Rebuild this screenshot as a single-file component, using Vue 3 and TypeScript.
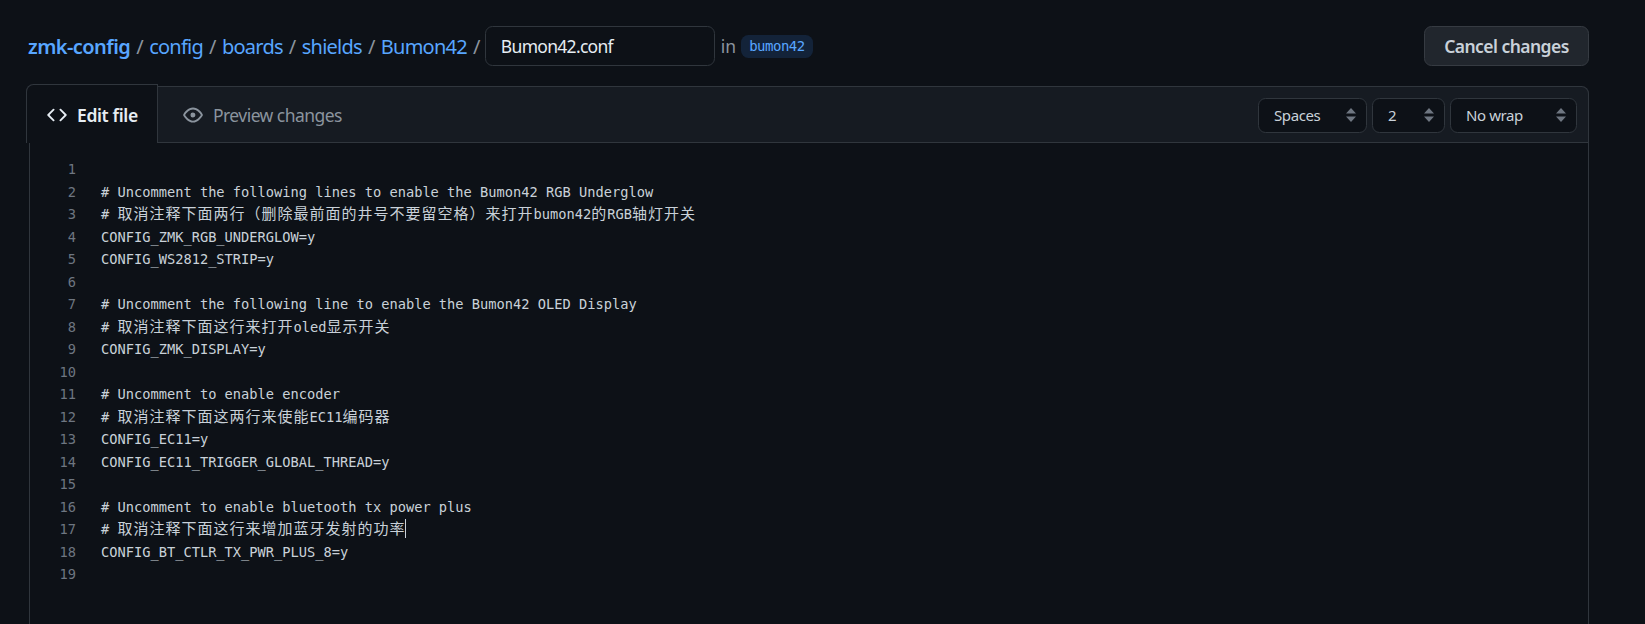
<script setup lang="ts">
const text: string[] = [
  '',
  '# Uncomment the following lines to enable the Bumon42 RGB Underglow',
  '# 取消注释下面两行（删除最前面的井号不要留空格）来打开bumon42的RGB轴灯开关',
  'CONFIG_ZMK_RGB_UNDERGLOW=y',
  'CONFIG_WS2812_STRIP=y',
  '',
  '# Uncomment the following line to enable the Bumon42 OLED Display',
  '# 取消注释下面这行来打开oled显示开关',
  'CONFIG_ZMK_DISPLAY=y',
  '',
  '# Uncomment to enable encoder',
  '# 取消注释下面这两行来使能EC11编码器',
  'CONFIG_EC11=y',
  'CONFIG_EC11_TRIGGER_GLOBAL_THREAD=y',
  '',
  '# Uncomment to enable bluetooth tx power plus',
  '# 取消注释下面这行来增加蓝牙发射的功率',
  'CONFIG_BT_CTLR_TX_PWR_PLUS_8=y',
  '',
]

interface Seg { t: string; cjk: boolean }

function segments(line: string): Seg[] {
  const parts = line.match(/[\u3000-\u9fff\uff00-\uffef]+|[^\u3000-\u9fff\uff00-\uffef]+/g) ?? []
  return parts.map((t) => ({ t, cjk: /[\u3000-\u9fff\uff00-\uffef]/.test(t) }))
}

const crumbs: string[] = ['config', 'boards', 'shields', 'Bumon42']
const caretLine = 17
</script>

<template>
  <div class="page">
    <header class="topbar">
      <nav class="crumbs">
        <a class="crumb root">zmk-config</a>
        <template v-for="c in crumbs" :key="c">
          <span class="sep">/</span>
          <a class="crumb">{{ c }}</a>
        </template>
        <span class="sep last">/</span>
        <div class="name-input">Bumon42.conf</div>
        <span class="in">in</span>
        <span class="branch">bumon42</span>
      </nav>
      <button class="cancel">Cancel changes</button>
    </header>

    <section class="box">
      <div class="box-head">
        <div class="tab active">
          <svg class="ico" viewBox="0 0 16 16" width="20" height="20" fill="currentColor"><path d="m11.28 3.22 4.25 4.25a.75.75 0 0 1 0 1.06l-4.25 4.25a.749.749 0 0 1-1.275-.326.749.749 0 0 1 .215-.734L13.94 8l-3.72-3.72a.749.749 0 0 1 .326-1.275.749.749 0 0 1 .734.215Zm-6.56 0a.751.751 0 0 1 1.042.018.751.751 0 0 1 .018 1.042L2.06 8l3.72 3.72a.749.749 0 0 1-.326 1.275.749.749 0 0 1-.734-.215L.47 8.53a.75.75 0 0 1 0-1.06Z"/></svg>
          <span>Edit file</span>
        </div>
        <div class="tab muted">
          <svg class="ico" viewBox="0 0 16 16" width="20" height="20" fill="currentColor"><path d="M8 2c1.981 0 3.671.992 4.933 2.078 1.27 1.091 2.187 2.345 2.637 3.023a1.62 1.62 0 0 1 0 1.798c-.45.678-1.367 1.932-2.637 3.023C11.67 13.008 9.981 14 8 14c-1.981 0-3.671-.992-4.933-2.078C1.797 10.83.88 9.576.43 8.898a1.62 1.62 0 0 1 0-1.798c.45-.677 1.367-1.931 2.637-3.022C4.33 2.992 6.019 2 8 2ZM1.679 7.932a.12.12 0 0 0 0 .136c.411.622 1.241 1.75 2.366 2.717C5.176 11.758 6.527 12.5 8 12.5c1.473 0 2.825-.742 3.955-1.715 1.124-.967 1.954-2.096 2.366-2.717a.12.12 0 0 0 0-.136c-.412-.621-1.242-1.75-2.366-2.717C10.824 4.242 9.473 3.5 8 3.5c-1.473 0-2.825.742-3.955 1.715-1.124.967-1.954 2.096-2.366 2.717ZM8 10a2 2 0 1 1-.001-3.999A2 2 0 0 1 8 10Z"/></svg>
          <span>Preview changes</span>
        </div>
        <div class="opts">
          <div class="sel w-spaces"><span>Spaces</span><svg viewBox="0 0 10 14" width="10" height="14"><path d="M5 0 10 5.5H0Z M5 14 0 8.5H10Z" fill="#6e7681"/></svg></div>
          <div class="sel w-size"><span>2</span><svg viewBox="0 0 10 14" width="10" height="14"><path d="M5 0 10 5.5H0Z M5 14 0 8.5H10Z" fill="#6e7681"/></svg></div>
          <div class="sel w-wrap"><span>No wrap</span><svg viewBox="0 0 10 14" width="10" height="14"><path d="M5 0 10 5.5H0Z M5 14 0 8.5H10Z" fill="#6e7681"/></svg></div>
        </div>
      </div>
      <div class="editor">
        <div v-for="(line, i) in text" :key="i" class="row">
          <span class="num">{{ i + 1 }}</span>
          <span class="code"><span v-for="(s, j) in segments(line)" :key="j" :class="s.cjk ? 'cjk' : 'lat'">{{ s.t }}</span><i v-if="i + 1 === caretLine" class="caret"></i></span>
        </div>
      </div>
    </section>
  </div>
</template>

<style>
html, body { background: #0d1117; }
</style>

<style scoped>
.page {
  height: 624px;
  overflow: hidden;
  background: #0d1117;
  color: #c9d1d9;
  font-family: "Noto Sans", sans-serif;
  box-sizing: border-box;
  padding-top: 26px;
}
.topbar {
  display: flex;
  justify-content: space-between;
  align-items: center;
  height: 40px;
  padding: 0 56px 0 28px;
}
.crumbs {
  display: flex;
  align-items: center;
  font-size: 20px;
  letter-spacing: -0.75px;
}
.crumb { color: #58a6ff; }
.root { font-weight: 600; letter-spacing: -0.55px; }
.sep { color: #8b949e; margin: 0 6px; letter-spacing: -0.55px; }
.sep.last { margin-right: 5px; }
.name-input {
  box-sizing: border-box;
  width: 230px;
  height: 40px;
  padding: 0 15px;
  display: flex;
  align-items: center;
  border: 1px solid #30363d;
  border-radius: 7.5px;
  background: #0d1117;
  color: #e6edf3;
  font-size: 17.5px;
  letter-spacing: -0.7px;
}
.in { color: #8b949e; margin: 0 5px 0 6px; font-size: 17.5px; letter-spacing: 0; }
.branch {
  height: 23px;
  display: flex;
  align-items: center;
  padding: 0 8px;
  border-radius: 7.5px;
  background: rgba(56, 139, 253, 0.15);
  color: #58a6ff;
  font: 14px "DejaVu Sans Mono", monospace;
  letter-spacing: -0.5px;
}
.cancel {
  box-sizing: border-box;
  width: 165px;
  height: 40px;
  border: 1px solid #363b42;
  border-radius: 7.5px;
  background: #21262d;
  color: #c9d1d9;
  font: 600 17.5px "Noto Sans", sans-serif;
  letter-spacing: -0.55px;
  padding: 0;
}
.box {
  margin: 20px 56px 0 26px;
}
.box-head {
  box-sizing: border-box;
  height: 57px;
  display: flex;
  align-items: stretch;
  background: #161b22;
  border: 1px solid #30363d;
  border-radius: 7.5px 7.5px 0 0;
  border-left: none;
  font-size: 17.5px;
  letter-spacing: -0.55px;
}
.tab {
  display: flex;
  align-items: center;
  box-sizing: border-box;
}
.tab.active {
  width: 132px;
  height: 59px;
  margin-top: -3px;
  margin-bottom: -1px;
  padding-left: 20px;
  padding-top: 2px;
  gap: 10px;
  background: #0d1117;
  border: 1px solid #30363d;
  border-bottom: none;
  border-radius: 7.5px 0 0 0;
  color: #e6edf3;
  font-weight: 600;
  letter-spacing: -0.35px;
}
.tab.muted { color: #8b949e; padding-left: 25px; gap: 10px; }
.ico { flex: none; }
.opts {
  margin-left: auto;
  display: flex;
  align-items: center;
  gap: 5px;
  padding-right: 11px;
  padding-top: 1px;
  font-size: 15px;
  letter-spacing: -0.4px;
}
.sel {
  box-sizing: border-box;
  height: 35px;
  display: flex;
  align-items: center;
  justify-content: space-between;
  padding: 0 10px 0 15px;
  border: 1px solid #30363d;
  border-radius: 7.5px;
  background: #0d1117;
}
.w-spaces { width: 109px; }
.w-size { width: 73px; }
.w-wrap { width: 127px; }
.editor {
  margin-left: 3px;
  padding-top: 15px;
  border-left: 1px solid #30363d;
  border-right: 1px solid #30363d;
  height: 600px;
  box-sizing: border-box;
}
.row {
  display: flex;
  height: 22.5px;
  line-height: 22.5px;
  font-family: "DejaVu Sans Mono", "Noto Sans CJK SC", monospace;
  font-size: 13.7px;
  white-space: pre;
}
.num {
  width: 46px;
  flex: none;
  text-align: right;
  color: #6e7681;
}
.code {
  margin-left: 25px;
  color: #c9d1d9;
}
.cjk {
  font-family: "Noto Sans CJK SC", monospace;
  font-size: 15px;
  line-height: 0;
  letter-spacing: 1px;
}
.caret {
  display: inline-block;
  width: 1px;
  height: 19px;
  margin-left: -1px;
  vertical-align: -4px;
  background: #c9d1d9;
}
</style>
